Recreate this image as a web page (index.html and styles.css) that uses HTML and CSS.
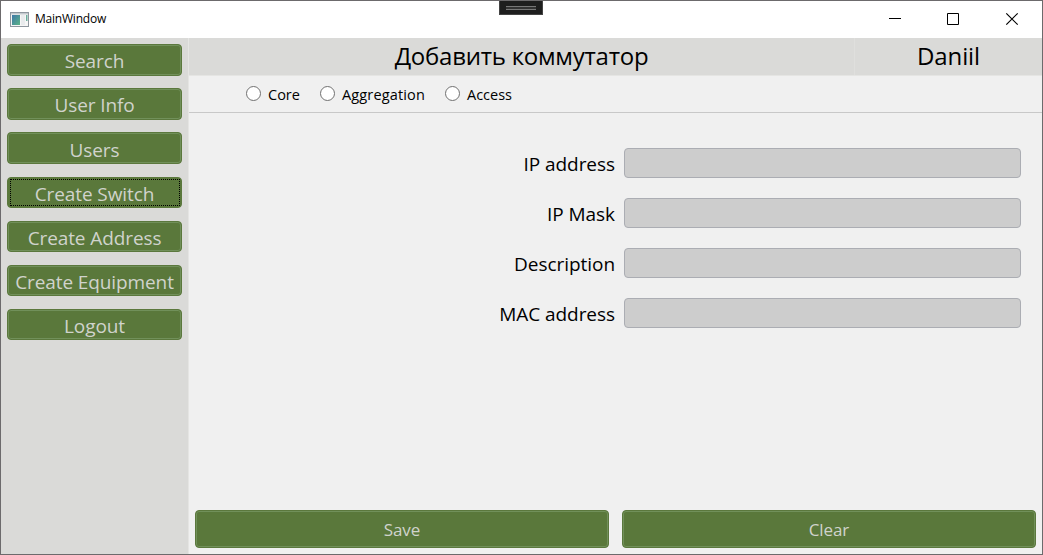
FILE: index.html
```html
<!DOCTYPE html>
<html lang="en">
<head>
<meta charset="utf-8">
<title>MainWindow</title>
<link rel="stylesheet" href="styles.css">
</head>
<body>
<div class="window">
  <header class="titlebar">
    <svg class="app-icon" width="19" height="15" viewBox="0 0 19 15">
      <defs><linearGradient id="g" x1="0" y1="0" x2="1" y2="1"><stop offset="0" stop-color="#3f78a8"/><stop offset="1" stop-color="#5cb487"/></linearGradient></defs>
      <rect x=".5" y=".5" width="18" height="14" fill="#f6f6f6" stroke="#8f979f"/>
      <rect x="1" y="1" width="17" height="1.5" fill="#c3c9ce"/>
      <rect x="2" y="3" width="8" height="10" fill="url(#g)"/>
      <rect x="11" y="3" width="4" height="10" fill="#e9ebed"/>
      <rect x="16" y="3" width="1.5" height="6" fill="#6aae9c"/>
    </svg>
    <span class="title">MainWindow</span>
    <svg class="controls" width="138" height="36" viewBox="0 0 138 36" fill="none" stroke="#000">
      <path d="M5 17.5h12M63.500 12.500h11v11h-11z"/>
      <path d="M122.300 12.300l11.400 11.400M133.700 12.300l-11.400 11.400" stroke-width="1.200"/>
    </svg>
    <div class="debug-tab"><div class="grip"></div></div>
  </header>
  <div class="body">
    <nav class="sidebar">
      <button class="btn nav">Search</button>
      <button class="btn nav">User Info</button>
      <button class="btn nav low">Users</button>
      <button class="btn nav short focused">Create Switch</button>
      <button class="btn nav short">Create Address</button>
      <button class="btn nav short">Create Equipment</button>
      <button class="btn nav short">Logout</button>
    </nav>
    <main class="main">
      <div class="heading">
        <h1 class="page-title">Добавить коммутатор</h1>
        <div class="user">Daniil</div>
      </div>
      <div class="radios">
        <label class="radio core"><i class="circle"></i><span>Core</span></label>
        <label class="radio aggregation"><i class="circle"></i><span class="wide">Aggregation</span></label>
        <label class="radio access"><i class="circle"></i><span>Access</span></label>
      </div>
      <form class="form">
        <label class="label" for="ip">IP address</label><input class="field" id="ip">
        <label class="label" for="mask">IP Mask</label><input class="field" id="mask">
        <label class="label" for="desc">Description</label><input class="field" id="desc">
        <label class="label" for="mac">MAC address</label><input class="field" id="mac">
      </form>
      <div class="actions">
        <button class="btn action">Save</button>
        <button class="btn action">Clear</button>
      </div>
    </main>
  </div>
</div>
</body>
</html>
```
FILE: styles.css
```css
* { box-sizing: border-box; }
body { margin: 0; font-family: "Open Sans", "Noto Sans", sans-serif; color: #000; }
.window { width: 1043px; height: 555px; border: 1px solid #6c6a6c; background: #f0f0f0; display: flex; flex-direction: column; overflow: hidden; }
.titlebar { position: relative; height: 37px; flex: none; background: #fff; display: flex; align-items: center; padding-left: 9px; }
.app-icon { margin-right: 6px; }
.title { font-size: 12px; letter-spacing: -0.22px; line-height: 16px; margin-top: -1px; }
.controls { margin-left: auto; margin-right: 20px; margin-top: -1px; }
.debug-tab { position: absolute; left: 498px; top: 0; width: 44px; height: 14px; background: #1e1e1e; border: 1px solid #444; border-top: 0; padding: 5px 6px; }
.grip { height: 4px; border-top: 1px solid #777; border-bottom: 1px solid #777; background: #333; }
.body { flex: 1; display: flex; min-height: 0; }
.sidebar { width: 188px; flex: none; background: #dadad8; border-right: 1px solid #e5e5e3; padding: 6px 6px 0; display: flex; flex-direction: column; }
.btn { display: block; padding: 0; border: 1px solid #5b783d; border-radius: 4px; box-shadow: inset 0 0 0 1px #71905a; background: #5a783b; color: #d0d3cc; font-family: inherit; text-align: center; white-space: nowrap; }
.nav { width: 175px; height: 32px; flex: none; margin-bottom: 12px; font-size: 19px; line-height: 32px; letter-spacing: -0.1px; }
.nav.low { line-height: 34px; }
.nav.short { height: 31px; margin-top: 1px; line-height: 33px; }
.focused { position: relative; box-shadow: none; }
.focused::after { content: ""; position: absolute; inset: 1px 1px 1px 2px; border: 1px dotted #000; }
.main { flex: 1; display: flex; flex-direction: column; min-width: 0; }
.heading { height: 38px; display: flex; background: #dadad8; border-bottom: 1px solid #e5e5e3; font-size: 24px; line-height: 36px; text-align: center; }
.page-title { width: 666px; margin: 0; font: inherit; letter-spacing: -0.24px; border-right: 1px solid #dfdfdd; white-space: nowrap; }
.user { flex: 1; letter-spacing: -0.1px; }
.radios { height: 37px; display: flex; align-items: center; padding-left: 57px; border-bottom: 1px solid #c8c8c8; font-size: 14.500px; }
.radio { display: flex; align-items: center; white-space: nowrap; }
.core { width: 74px; }
.aggregation { width: 125px; }
.wide { letter-spacing: 0.15px; }
.circle { width: 15px; height: 15px; border: 1px solid #707070; border-radius: 50%; background: #fff; margin: 0 7px 2px 0; }
.form { flex: 1; display: grid; grid-template-columns: 426px 397px; grid-auto-rows: 30px; row-gap: 20px; column-gap: 9px; padding-top: 35px; }
.label { text-align: right; font-size: 19px; line-height: 33px; letter-spacing: -0.05px; white-space: nowrap; }
.field { height: 30px; border: 1px solid #abadb3; border-radius: 4px; background: #cdcdcd; padding: 0 6px; outline: none; }
.actions { display: flex; gap: 13px; padding: 0 6px 6px; }
.action { flex: 1; height: 38px; font-size: 17px; line-height: 37px; letter-spacing: -0.1px; }
```
